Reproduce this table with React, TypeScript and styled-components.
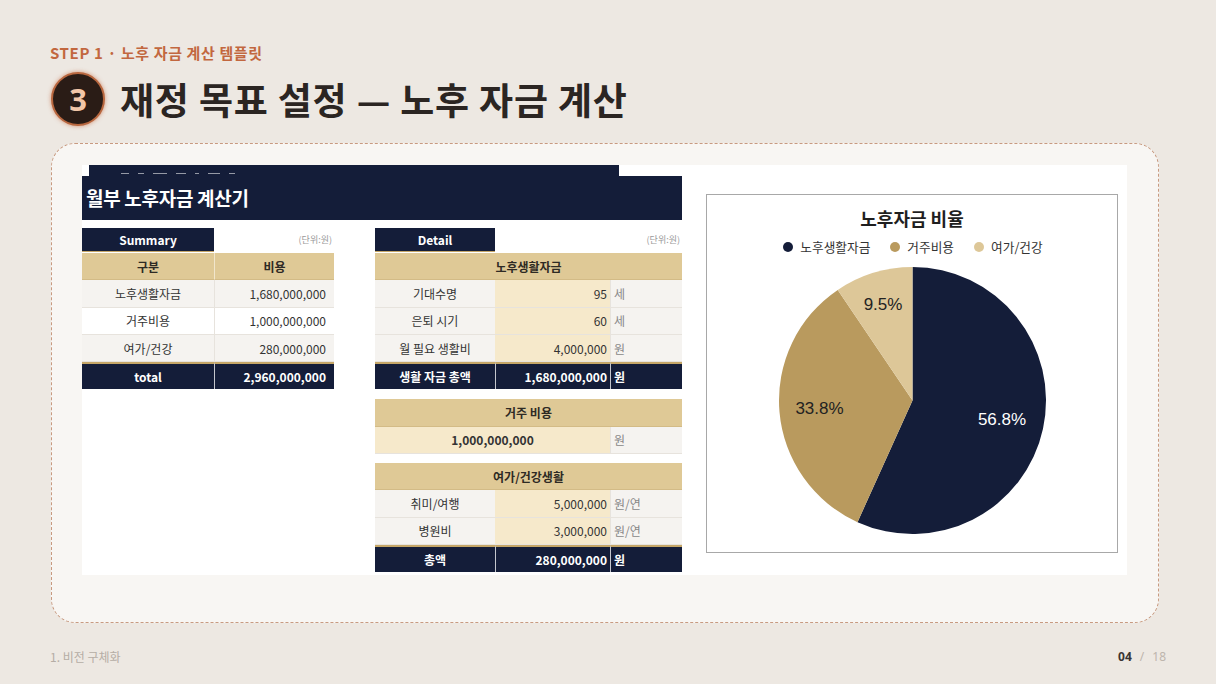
import React from "react";
import styled, { createGlobalStyle } from "styled-components";

const NAVY = "#141d39";
const TAN = "#dfc996";
const BEIGE = "#f6e9cb";
const LABEL = "#f5f3f0";
const GOLD = "#c5a667";
const LINE = "#e7e3dd";
const PIE_TAN = "#b99a5e";
const PIE_LIGHT = "#ddc798";

const Global = createGlobalStyle`
  html, body { margin: 0; padding: 0; background: #ede8e2; }
  body { font-family: "Noto Sans CJK KR", "Noto Sans", sans-serif; }
  * { box-sizing: border-box; }
`;

const Page = styled.div`
  width: 1216px;
  height: 684px;
  padding: 43px 50px 0 50px;
  display: flex;
  flex-direction: column;
  overflow: hidden;
`;

const Step = styled.div`
  font-size: 15px;
  font-weight: 700;
  color: #c2673f;
  line-height: 20px;
  height: 20px;
  letter-spacing: 0.6px;
`;

const TitleRow = styled.div`
  display: flex;
  align-items: center;
  gap: 15px;
  margin-top: 10px;
  height: 52px;
  margin-left: 1px;
`;

const Badge = styled.div`
  width: 54px;
  height: 54px;
  flex: none;
  border-radius: 50%;
  background: #2a1c16;
  border: 2px solid #b8673f;
  box-shadow: 0 0 4px rgba(200, 110, 70, 0.7);
  display: flex;
  align-items: center;
  justify-content: center;
  color: #f2c6a8;
  font-family: "Noto Sans", sans-serif;
  font-size: 31px;
  font-weight: 700;
  line-height: 1;
`;

const Heading = styled.h1`
  margin: 0;
  font-size: 37px;
  font-weight: 700;
  color: #2b2522;
  line-height: 52px;
  letter-spacing: 0.8px;
`;

const Card = styled.div`
  margin-top: 18px;
  margin-left: 1px;
  width: 1108px;
  height: 480px;
  border: 1px dashed #c89a80;
  border-radius: 24px;
  background: #f8f6f3;
  padding: 21px 31px 0 30px;
`;

const Panel = styled.div`
  width: 1045px;
  height: 410px;
  background: #fff;
  display: flex;
  align-items: flex-start;
`;

const LeftCol = styled.div`
  width: 600px;
  display: flex;
  flex-direction: column;
`;

const Strip = styled.div`
  margin-left: 7px;
  width: 530px;
  height: 11px;
  background: ${NAVY};
  display: flex;
  align-items: flex-end;
  gap: 9px;
  padding: 0 0 2px 32px;
`;

const Tick = styled.span<{ $w: number }>`
  width: ${(p) => p.$w}px;
  height: 1.5px;
  background: rgba(255, 255, 255, 0.55);
`;

const SheetHeader = styled.div`
  height: 44px;
  background: ${NAVY};
  color: #fff;
  font-size: 19px;
  font-weight: 700;
  line-height: 44px;
  padding-left: 4px;
  letter-spacing: -0.3px;
`;

const Tables = styled.div`
  margin-top: 8px;
  display: flex;
  gap: 41px;
  align-items: flex-start;
`;

const TableBlock = styled.div<{ $w: number }>`
  width: ${(p) => p.$w}px;
  display: flex;
  flex-direction: column;
`;

const TopRow = styled.div`
  display: flex;
  height: 24px;
  margin-bottom: 1px;
`;

const NavyTag = styled.div<{ $w: number }>`
  width: ${(p) => p.$w}px;
  background: ${NAVY};
  color: #fff;
  font-size: 12px;
  font-weight: 700;
  text-align: center;
  line-height: 24px;
  border-bottom: 1px solid ${GOLD};
`;

const Unit = styled.div`
  flex: 1;
  text-align: right;
  font-size: 9px;
  color: #9a9a9a;
  line-height: 24px;
  padding-right: 2px;
`;

const Grid = styled.div<{ $cols: string }>`
  display: grid;
  grid-template-columns: ${(p) => p.$cols};
`;

type Align = "left" | "center" | "right";
type CellProps = {
  $bg?: string;
  $align?: Align;
  $bold?: boolean;
  $span?: number;
  $color?: string;
  $sep?: boolean;
  $pad?: number;
};

const Cell = styled.div<CellProps>`
  height: 27.3px;
  display: flex;
  align-items: center;
  justify-content: ${(p) =>
    p.$align === "left" ? "flex-start" : p.$align === "right" ? "flex-end" : "center"};
  padding: 0 ${(p) => p.$pad ?? 6}px;
  grid-column: span ${(p) => p.$span ?? 1};
  background: ${(p) => p.$bg ?? "#fff"};
  color: ${(p) => p.$color ?? "#333"};
  font-size: 12px;
  font-weight: ${(p) => (p.$bold ? 700 : 400)};
  border-bottom: 1px solid ${LINE};
  border-left: ${(p) => (p.$sep ? `1px solid ${LINE}` : "none")};
  white-space: nowrap;
`;

const HeadCell = styled(Cell)`
  background: ${TAN};
  font-weight: 700;
  color: #2e2a24;
  border-bottom: 1px solid #d3bb86;
  border-left: ${(p) => (p.$sep ? "1px solid #f1e6cc" : "none")};
`;

const TotalCell = styled(Cell)`
  background: ${NAVY};
  color: #fff;
  font-weight: 700;
  border-top: 2px solid ${GOLD};
  border-bottom: none;
  border-left: ${(p) => (p.$sep ? "1px solid rgba(255,255,255,0.75)" : "none")};
`;

const ChartBox = styled.div`
  margin-left: 24px;
  margin-top: 29px;
  width: 412px;
  height: 359px;
  border: 1px solid #a8a8a8;
  background: #fff;
  display: flex;
  flex-direction: column;
  align-items: center;
`;

const ChartTitle = styled.div`
  margin-top: 11px;
  font-size: 18px;
  font-weight: 700;
  color: #1f1f1f;
  line-height: 24px;
`;

const Legend = styled.div`
  margin-top: 8px;
  display: flex;
  gap: 20px;
  font-size: 12.7px;
  line-height: 18px;
  color: #333;
  padding-left: 2px;
`;

const LegendItem = styled.div`
  display: flex;
  align-items: center;
  gap: 7px;
`;

const Dot = styled.span<{ $c: string }>`
  width: 10px;
  height: 10px;
  border-radius: 50%;
  background: ${(p) => p.$c};
`;

const PieSvg = styled.svg`
  margin-top: 10px;
  display: block;
`;

const Footer = styled.div`
  margin-top: 25px;
  height: 18px;
  display: flex;
  justify-content: space-between;
  align-items: center;
  font-size: 12px;
  line-height: 18px;
`;

const FootLeft = styled.div`
  color: #b5ada5;
`;

const PageNo = styled.div`
  display: flex;
  gap: 8px;
  font-family: "Noto Sans", sans-serif;
  font-size: 12px;
`;

const Cur = styled.span`
  color: #3a3533;
  font-weight: 700;
`;

const Muted = styled.span`
  color: #bdb5ad;
`;

const Section = styled.div<{ $mt: number }>`
  margin-top: ${(p) => p.$mt}px;
`;

const PIE = [
  { v: 1680, c: NAVY },
  { v: 1000, c: PIE_TAN },
  { v: 280, c: PIE_LIGHT },
];

function slice(cx: number, cy: number, r: number, a0: number, a1: number) {
  const rad = (a: number) => (a * Math.PI) / 180;
  const x0 = cx + r * Math.sin(rad(a0));
  const y0 = cy - r * Math.cos(rad(a0));
  const x1 = cx + r * Math.sin(rad(a1));
  const y1 = cy - r * Math.cos(rad(a1));
  const large = a1 - a0 > 180 ? 1 : 0;
  return `M${cx},${cy} L${x0.toFixed(2)},${y0.toFixed(2)} A${r},${r} 0 ${large} 1 ${x1.toFixed(2)},${y1.toFixed(2)} Z`;
}

function Pie() {
  const total = PIE.reduce((s, p) => s + p.v, 0);
  let a = 0;
  const cx = 134.5;
  const cy = 134.5;
  const r = 133.5;
  return (
    <PieSvg width="269" height="269" viewBox="0 0 269 269">
      {PIE.map((p, i) => {
        const a0 = a;
        const a1 = a + (p.v / total) * 360;
        a = a1;
        return <path key={i} d={slice(cx, cy, r, a0, a1)} fill={p.c} />;
      })}
      <g fontFamily="'Liberation Sans', Arial, sans-serif" fontSize="17" textAnchor="middle">
        <text x="105" y="44" fill="#222">9.5%</text>
        <text x="41.5" y="148" fill="#222">33.8%</text>
        <text x="224" y="158.5" fill="#fff">56.8%</text>
      </g>
    </PieSvg>
  );
}

export default function App() {
  return (
    <>
      <Global />
      <Page>
        <Step>STEP 1 · 노후 자금 계산 템플릿</Step>
        <TitleRow>
          <Badge>3</Badge>
          <Heading>재정 목표 설정 — 노후 자금 계산</Heading>
        </TitleRow>

        <Card>
          <Panel>
            <LeftCol>
              <Strip>
                <Tick $w={8} />
                <Tick $w={6} />
                <Tick $w={14} />
                <Tick $w={10} />
                <Tick $w={4} />
                <Tick $w={12} />
                <Tick $w={6} />
              </Strip>
              <SheetHeader>월부 노후자금 계산기</SheetHeader>
              <Tables>
                <TableBlock $w={252}>
                  <TopRow>
                    <NavyTag $w={132}>Summary</NavyTag>
                    <Unit>(단위:원)</Unit>
                  </TopRow>
                  <Grid $cols="132px 120px">
                    <HeadCell>구분</HeadCell>
                    <HeadCell $sep>비용</HeadCell>
                    <Cell $bg={LABEL}>노후생활자금</Cell>
                    <Cell $bg={LABEL} $sep $align="right" $pad={8}>1,680,000,000</Cell>
                    <Cell>거주비용</Cell>
                    <Cell $sep $align="right" $pad={8}>1,000,000,000</Cell>
                    <Cell $bg={LABEL}>여가/건강</Cell>
                    <Cell $bg={LABEL} $sep $align="right" $pad={8}>280,000,000</Cell>
                    <TotalCell>total</TotalCell>
                    <TotalCell $sep $align="right" $pad={8}>2,960,000,000</TotalCell>
                  </Grid>
                </TableBlock>

                <TableBlock $w={307}>
                  <TopRow>
                    <NavyTag $w={120}>Detail</NavyTag>
                    <Unit>(단위:원)</Unit>
                  </TopRow>
                  <Grid $cols="120px 115px 72px">
                    <HeadCell $span={3}>노후생활자금</HeadCell>
                    <Cell $bg={LABEL}>기대수명</Cell>
                    <Cell $bg={BEIGE} $align="right" $pad={3}>95</Cell>
                    <Cell $bg={LABEL} $sep $align="left" $pad={3} $color="#888">세</Cell>
                    <Cell $bg={LABEL}>은퇴 시기</Cell>
                    <Cell $bg={BEIGE} $align="right" $pad={3}>60</Cell>
                    <Cell $bg={LABEL} $sep $align="left" $pad={3} $color="#888">세</Cell>
                    <Cell $bg={LABEL}>월 필요 생활비</Cell>
                    <Cell $bg={BEIGE} $align="right" $pad={3}>4,000,000</Cell>
                    <Cell $bg={LABEL} $sep $align="left" $pad={3} $color="#888">원</Cell>
                    <TotalCell>생활 자금 총액</TotalCell>
                    <TotalCell $sep $align="right" $pad={3}>1,680,000,000</TotalCell>
                    <TotalCell $sep $align="left" $pad={3}>원</TotalCell>
                  </Grid>

                  <Section $mt={10}>
                    <Grid $cols="120px 115px 72px">
                      <HeadCell $span={3}>거주 비용</HeadCell>
                      <Cell $bg={BEIGE} $span={2} $bold>1,000,000,000</Cell>
                      <Cell $bg={LABEL} $sep $align="left" $pad={3} $color="#888">원</Cell>
                    </Grid>
                  </Section>

                  <Section $mt={9}>
                    <Grid $cols="120px 115px 72px">
                      <HeadCell $span={3}>여가/건강생활</HeadCell>
                      <Cell $bg={LABEL}>취미/여행</Cell>
                      <Cell $bg={BEIGE} $align="right" $pad={3}>5,000,000</Cell>
                      <Cell $bg={LABEL} $sep $align="left" $pad={3} $color="#888">원/연</Cell>
                      <Cell $bg={LABEL}>병원비</Cell>
                      <Cell $bg={BEIGE} $align="right" $pad={3}>3,000,000</Cell>
                      <Cell $bg={LABEL} $sep $align="left" $pad={3} $color="#888">원/연</Cell>
                      <TotalCell>총액</TotalCell>
                      <TotalCell $sep $align="right" $pad={3}>280,000,000</TotalCell>
                      <TotalCell $sep $align="left" $pad={3}>원</TotalCell>
                    </Grid>
                  </Section>
                </TableBlock>
              </Tables>
            </LeftCol>

            <ChartBox>
              <ChartTitle>노후자금 비율</ChartTitle>
              <Legend>
                <LegendItem>
                  <Dot $c={NAVY} />
                  노후생활자금
                </LegendItem>
                <LegendItem>
                  <Dot $c={PIE_TAN} />
                  거주비용
                </LegendItem>
                <LegendItem>
                  <Dot $c={PIE_LIGHT} />
                  여가/건강
                </LegendItem>
              </Legend>
              <Pie />
            </ChartBox>
          </Panel>
        </Card>

        <Footer>
          <FootLeft>1. 비전 구체화</FootLeft>
          <PageNo>
            <Cur>04</Cur>
            <Muted>/</Muted>
            <Muted>18</Muted>
          </PageNo>
        </Footer>
      </Page>
    </>
  );
}
